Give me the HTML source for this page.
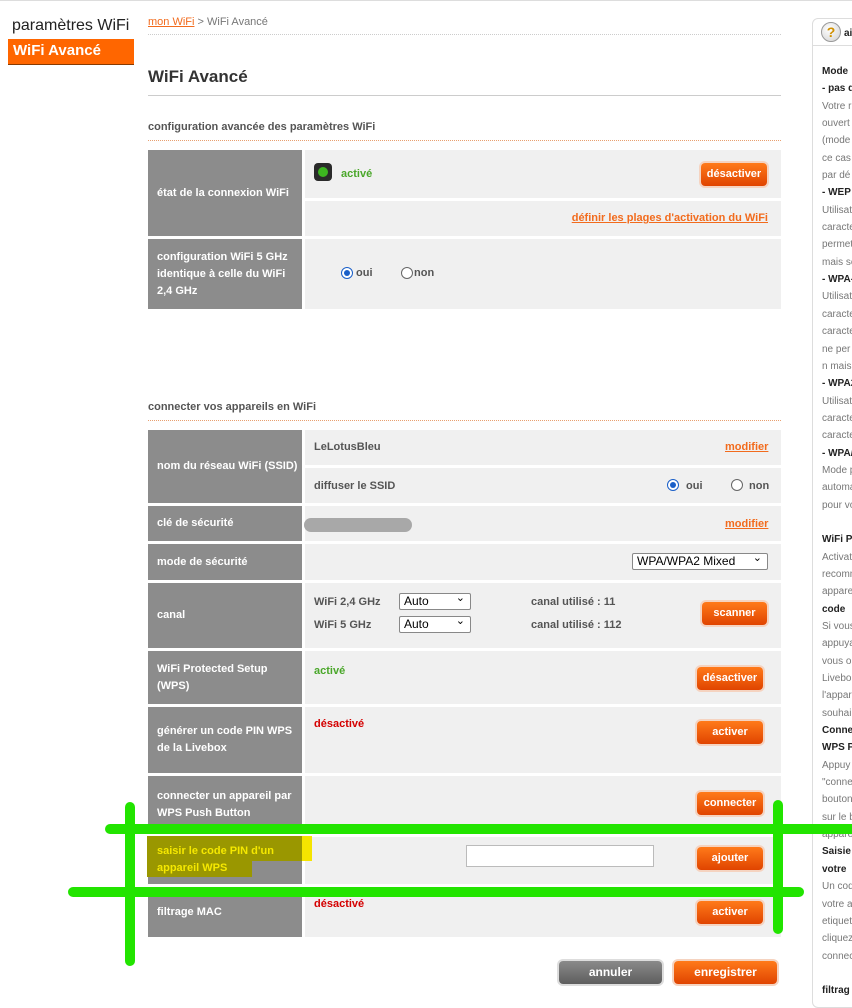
<!DOCTYPE html>
<html><head><meta charset="utf-8">
<style>
*{margin:0;padding:0;box-sizing:border-box}
body{width:852px;height:999px;overflow:hidden;background:#fff;font-family:"Liberation Sans",Arial,sans-serif;position:relative;color:#555}
.a{position:absolute}
.lab{position:absolute;left:148px;width:154px;background:#8c8c8c;color:#fff;font-weight:bold;font-size:11px;line-height:17px;padding-left:9px;display:flex;align-items:center}
.cell{position:absolute;left:305px;width:476px;background:#f0f0f0}
.t{position:absolute;font-size:11px;font-weight:bold;white-space:nowrap}
.btn{position:absolute;height:23px;border-radius:4px;background:linear-gradient(#ff7a1a,#e04400);color:#fff;font-weight:bold;font-size:11px;text-align:center;line-height:22px;box-shadow:0 0 0 2px #f5d3c0}
.lnk{color:#f26b1d;text-decoration:underline;font-weight:bold}
.dot{position:absolute;left:148px;width:633px;border-top:1px dotted #e8a070}
.sel{position:absolute;height:17px;border:1px solid #888;border-radius:2px;background:#fff;font-size:12px;color:#000;padding-left:4px;line-height:15px}
.sel:after{content:"⌄";position:absolute;right:5px;top:-3px;font-size:11px}
.radio{position:absolute;width:12px;height:12px;border:1px solid #666;border-radius:50%;background:#fff}
.radio.on{border-color:#1a5fc8}
.radio.on:after{content:"";position:absolute;left:2px;top:2px;width:6px;height:6px;border-radius:50%;background:#1a5fc8}
.side{position:absolute;left:822px;font-size:10px;color:#777;white-space:nowrap}
.side b{color:#222}
.g{position:absolute;background:#22e400;border-radius:5px}
</style></head><body>
<div class="a" style="left:0;top:0;width:852px;height:1px;background:#ddd"></div>
<div class="a" style="left:12px;top:17px;font-size:16px;color:#222">paramètres WiFi</div>
<div class="a" style="left:8px;top:39px;width:126px;height:26px;background:#ff6600;border-bottom:1px solid #8a3a00;color:#fff;font-weight:bold;font-size:15px;padding:3px 0 0 5px">WiFi Avancé</div>
<div class="a" style="left:148px;top:16px;font-size:11px;color:#777"><span style="color:#f26b1d;text-decoration:underline">mon WiFi</span> &gt; WiFi Avancé</div>
<div class="dot" style="top:34px;border-color:#ccc"></div>
<div class="a" style="left:148px;top:67px;font-size:17px;font-weight:bold;color:#333">WiFi Avancé</div>
<div class="a" style="left:148px;top:95px;width:633px;height:1px;background:#ccc"></div>
<div class="t" style="left:148px;top:121px;color:#555">configuration avancée des paramètres WiFi</div>
<div class="dot" style="top:140px"></div>
<div class="lab" style="top:150px;height:86px">état de la connexion WiFi</div>
<div class="cell" style="top:150px;height:48px"></div>
<div class="cell" style="top:201px;height:35px"></div>
<div class="a" style="left:314px;top:163px;width:18px;height:18px;border-radius:4px;background:#2a2a2a"></div>
<div class="a" style="left:318px;top:167px;width:10px;height:10px;border-radius:50%;background:#3db520"></div>
<div class="t" style="left:341px;top:168px;color:#4aa72a">activé</div>
<div class="btn" style="left:701px;top:163px;width:66px">désactiver</div>
<div class="t lnk" style="right:84px;top:212px">définir les plages d'activation du WiFi</div>
<div class="lab" style="top:239px;height:70px">configuration WiFi 5 GHz<br>identique à celle du WiFi<br>2,4 GHz</div>
<div class="cell" style="top:239px;height:70px"></div>
<div class="radio on" style="left:341px;top:267px"></div>
<div class="t" style="left:356px;top:267px">oui</div>
<div class="radio" style="left:401px;top:267px"></div>
<div class="t" style="left:414px;top:267px">non</div>
<div class="t" style="left:148px;top:401px;color:#555">connecter vos appareils en WiFi</div>
<div class="dot" style="top:420px"></div>
<div class="lab" style="top:430px;height:73px">nom du réseau WiFi (SSID)</div>
<div class="cell" style="top:430px;height:35px"></div>
<div class="cell" style="top:468px;height:35px"></div>
<div class="t" style="left:314px;top:441px">LeLotusBleu</div>
<div class="t lnk" style="left:725px;top:441px">modifier</div>
<div class="t" style="left:314px;top:480px">diffuser le SSID</div>
<div class="radio on" style="left:667px;top:479px"></div>
<div class="t" style="left:686px;top:480px">oui</div>
<div class="radio" style="left:731px;top:479px"></div>
<div class="t" style="left:749px;top:480px">non</div>
<div class="lab" style="top:506px;height:35px">clé de sécurité</div>
<div class="cell" style="top:506px;height:35px"></div>
<div class="a" style="left:304px;top:518px;width:108px;height:14px;border-radius:7px;background:#a8a8a8"></div>
<div class="t lnk" style="left:725px;top:518px">modifier</div>
<div class="lab" style="top:544px;height:36px">mode de sécurité</div>
<div class="cell" style="top:544px;height:36px"></div>
<div class="sel" style="left:632px;top:553px;width:136px">WPA/WPA2 Mixed</div>
<div class="lab" style="top:583px;height:65px">canal</div>
<div class="cell" style="top:583px;height:65px"></div>
<div class="t" style="left:314px;top:596px">WiFi 2,4 GHz</div>
<div class="t" style="left:314px;top:619px">WiFi 5 GHz</div>
<div class="sel" style="left:399px;top:593px;width:72px">Auto</div>
<div class="sel" style="left:399px;top:616px;width:72px">Auto</div>
<div class="t" style="left:531px;top:596px">canal utilisé : 11</div>
<div class="t" style="left:531px;top:619px">canal utilisé : 112</div>
<div class="btn" style="left:702px;top:602px;width:65px">scanner</div>
<div class="lab" style="top:651px;height:53px">WiFi Protected Setup<br>(WPS)</div>
<div class="cell" style="top:651px;height:53px"></div>
<div class="t" style="left:314px;top:665px;color:#4aa72a">activé</div>
<div class="btn" style="left:697px;top:667px;width:66px">désactiver</div>
<div class="lab" style="top:707px;height:66px">générer un code PIN WPS<br>de la Livebox</div>
<div class="cell" style="top:707px;height:66px"></div>
<div class="t" style="left:314px;top:718px;color:#d40000">désactivé</div>
<div class="btn" style="left:697px;top:721px;width:66px">activer</div>
<div class="lab" style="top:776px;height:58px">connecter un appareil par<br>WPS Push Button</div>
<div class="cell" style="top:776px;height:58px"></div>
<div class="btn" style="left:697px;top:792px;width:66px">connecter</div>
<div class="lab" style="top:837px;height:47px"></div>
<div class="cell" style="top:837px;height:47px"></div>
<div class="a" style="left:147px;top:836px;width:155px;height:25px;background:#9a9700"></div>
<div class="a" style="left:302px;top:836px;width:10px;height:25px;background:#f5e400"></div>
<div class="a" style="left:147px;top:861px;width:105px;height:16px;background:#9a9700"></div>
<div class="t" style="left:157px;top:843px;color:#f5e800;line-height:17px">saisir le code PIN d'un<br>appareil WPS</div>
<div class="a" style="left:466px;top:845px;width:188px;height:22px;background:#fff;border:1px solid #bbb"></div>
<div class="btn" style="left:697px;top:847px;width:66px">ajouter</div>
<div class="lab" style="top:887px;height:50px">filtrage MAC</div>
<div class="cell" style="top:887px;height:50px"></div>
<div class="t" style="left:314px;top:898px;color:#d40000">désactivé</div>
<div class="btn" style="left:697px;top:901px;width:66px">activer</div>
<div class="btn" style="left:559px;top:961px;width:103px;background:linear-gradient(#8a8a8a,#5e5e5e);box-shadow:0 0 0 2px #ddd;font-size:12px">annuler</div>
<div class="btn" style="left:674px;top:961px;width:103px;font-size:12px">enregistrer</div>
<div class="a" style="left:812px;top:18px;width:60px;height:990px;border:1px solid #ddd;border-radius:6px"></div>
<div class="a" style="left:812px;top:45px;width:40px;height:1px;background:#ddd"></div>
<div class="a" style="left:821px;top:22px;width:20px;height:20px;border-radius:50%;background:radial-gradient(circle at 40% 35%,#fff,#d0d0d0);border:1px solid #999;color:#d09000;font-weight:bold;font-size:14px;text-align:center;line-height:18px">?</div>
<div class="side" style="top:28px"><b style="margin-left:22px">ai</b></div>
<div class="side" style="top:63px;line-height:17.35px">
<b>Mode</b><br><b>- pas d</b><br>Votre r<br>ouvert<br>(mode<br>ce cas<br>par dé<br><b>- WEP</b><br>Utilisati<br>caracte<br>permet<br>mais se<br><b>- WPA-</b><br>Utilisati<br>caracte<br>caracte<br>ne per<br>n mais<br><b>- WPA2</b><br>Utilisati<br>caracte<br>caracte<br><b>- WPA/</b><br>Mode p<br>automa<br>pour vo<br><br><b>WiFi P</b><br>Activat<br>recomm<br>appare<br><b>code</b><br>Si vous<br>appuya<br>vous o<br>Livebo<br>l'appar<br>souhai<br><b>Conne</b><br><b>WPS P</b><br>Appuy<br>"conne<br>bouton<br>sur le b<br>appare<br><b>Saisie</b><br><b>votre</b><br>Un cod<br>votre a<br>etiquet<br>cliquez<br>connec<br><br><b>filtrag</b>
</div>
<div class="g" style="left:105px;top:824px;width:760px;height:10px"></div>
<div class="g" style="left:68px;top:887px;width:736px;height:10px"></div>
<div class="g" style="left:125px;top:802px;width:10px;height:164px"></div>
<div class="g" style="left:773px;top:800px;width:10px;height:134px"></div>
</body></html>
